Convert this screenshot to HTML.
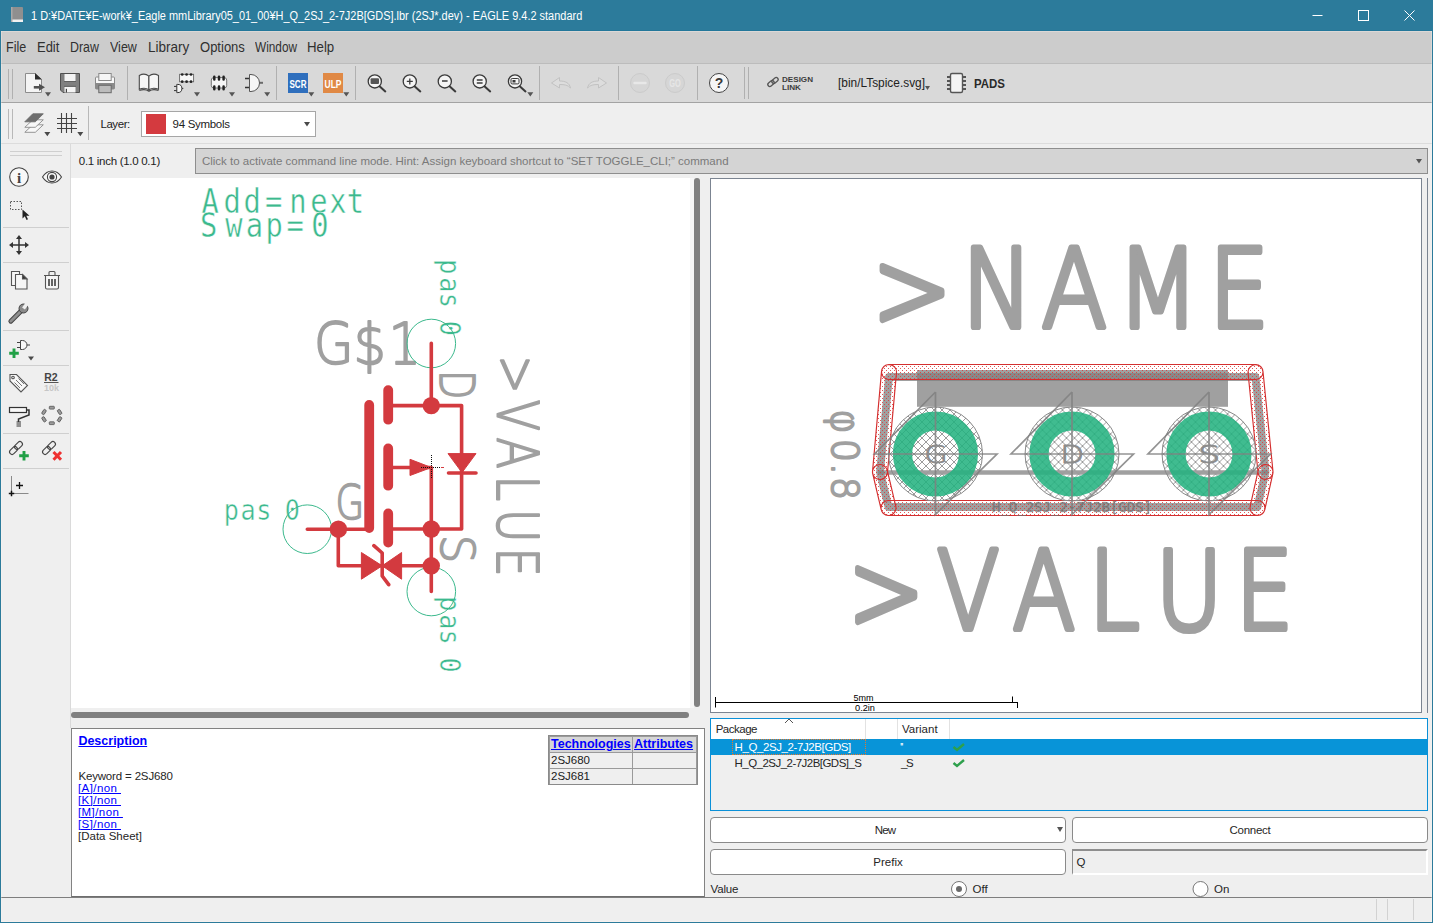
<!DOCTYPE html>
<html lang="en">
<head>
<meta charset="utf-8">
<title>EAGLE 9.4.2 standard</title>
<style>
*{box-sizing:border-box;margin:0;padding:0}
html,body{width:1433px;height:923px;overflow:hidden;background:#efefef}
body{font-family:"Liberation Sans","Noto Sans CJK JP",sans-serif;font-size:12px;color:#1a1a1a;position:relative}
.abs{position:absolute}
#win{position:absolute;left:0;top:0;width:1433px;height:923px;background:#efefef;overflow:hidden}
#title{left:0;top:0;width:1433px;height:31px;background:#2c7b9b;color:#fff}
#title .t{position:absolute;left:31.400px;top:9px;font-size:12px;line-height:14px;transform:scaleX(.9125);transform-origin:0 0;white-space:nowrap}
#menu{left:1px;top:31px;width:1431px;height:32px;background:#cccccc}
#menu span{position:absolute;top:8px;transform-origin:0 0;font-size:14px;line-height:16px;color:#303030;white-space:nowrap}
#tb1{left:1px;top:63px;width:1431px;height:40px;background:#d9d9d9;border-top:1px solid #bcbcbc;border-bottom:1px solid #a3a3a3}
#tb2{left:1px;top:103px;width:1431px;height:41px;background:#efefef;border-bottom:1px solid #dcdcdc}
.vsep{position:absolute;width:1px;background:#b4b4b4}
#bl,#br,#bb{background:#2c7b9b}
#bl{left:0;top:31px;width:1px;height:892px}
#br{left:1432px;top:31px;width:1px;height:892px}
#bb{left:0;top:922px;width:1433px;height:1px}
svg{position:absolute;overflow:visible}
.dsc{font-size:11.500px;color:#262626;white-space:nowrap;line-height:13px}
.lk{color:#0000ff;text-decoration:underline}
.tc{background:#efefef;font-size:11.500px;line-height:15px;white-space:nowrap;overflow:hidden}
.tc span{position:absolute;left:1px;top:0}
.th{background:#d6d6d6;font-weight:bold;color:#0000ff;font-size:12.500px}
.th span{text-decoration:underline}
.pk{font-size:11.500px;color:#262626;white-space:nowrap;line-height:13px}
.btn{background:#fff;border:1px solid #8a8a8a;border-radius:4px;text-align:center;font-size:11.500px;line-height:24px;color:#262626}

</style>
</head>
<body>
<div id="win">
<!--TITLE-->
<div id="title" class="abs">
  <svg style="left:10px;top:6px" width="14" height="18" viewBox="0 0 14 18"><rect x="1" y="1" width="12" height="15" rx="1" fill="#8f8f8f"/><rect x="2" y="13.5" width="11" height="2.5" fill="#f2f2f2"/><rect x="1" y="1" width="1.5" height="15" fill="#a9a9a9"/></svg>
  <div class="t">1 D:¥DATE¥E-work¥_Eagle mmLibrary05_01_00¥H_Q_2SJ_2-7J2B[GDS].lbr (2SJ*.dev) - EAGLE 9.4.2 standard</div>
  <svg style="left:1312px;top:10px" width="110" height="12" viewBox="0 0 110 12" fill="none" stroke="#fff" stroke-width="1"><path d="M0.5 5.5H10.5"/><rect x="46.500" y="0.5" width="10" height="10"/><path d="M92.500 0.500l10 10M102.500 0.500l-10 10"/></svg>
</div>
<!--MENU-->
<div id="menu" class="abs">
  <span style="left:4.8px;transform:scaleX(0.894)">File</span><span style="left:35.8px;transform:scaleX(0.927)">Edit</span><span style="left:68.6px;transform:scaleX(0.887)">Draw</span><span style="left:108.6px;transform:scaleX(0.894)">View</span><span style="left:147.0px;transform:scaleX(0.967)">Library</span><span style="left:199px;transform:scaleX(0.93)">Options</span><span style="left:254px;transform:scaleX(0.845)">Window</span><span style="left:306px;transform:scaleX(0.946)">Help</span>
</div>
<div id="tb1" class="abs">
<svg style="left:0;top:0" width="1431" height="38" viewBox="1 64 1431 38">
  <g stroke="#b0b0b0" stroke-width="1"><path d="M8.500 69V99M12.500 69V99"/><path d="M127.500 66V100M276.500 66V100M355.500 66V100M539.500 66V100M618.500 66V100M697.500 66V100M744.500 67V99M748.500 67V99"/></g>
  <g fill="#555"><path d="M45 92.300h6l-3 4.200zM194 92.300h6l-3 4.200zM229 92.300h6l-3 4.200zM264.200 92.300h6l-3 4.200zM308.300 92.300h6l-3 4.200zM343.300 92.300h6l-3 4.200zM527.300 92.300h6l-3 4.200zM925 86h5l-2.500 4z"/></g>
  <!-- new/open -->
  <g><path d="M25.500 73.500h9.500l6.500 6v13h-16z" fill="#f4f4f4" stroke="#8c8c8c"/><path d="M35 73l7 6.500h-7z" fill="#2e2e2e"/><path d="M33.800 87.300h6" stroke="#505050" stroke-width="2.600"/><path d="M39 83.800l6 3.500-6 3.500z" fill="#505050"/></g>
  <!-- save -->
  <g><path d="M60.500 73.500h19v19h-16.500l-2.500-2.500z" fill="#808080" stroke="#505050"/><rect x="64.500" y="74" width="11" height="7" fill="#f4f4f4"/><rect x="64.500" y="86.800" width="11" height="5.700" fill="#f4f4f4"/><rect x="65.800" y="88.800" width="1.200" height="3.700" fill="#444"/><path d="M64 81.500h12M64 86.300h12" stroke="#606060" stroke-width="1"/></g>
  <!-- print -->
  <g><rect x="95.500" y="77" width="19" height="12" rx="1" fill="#f8f8f8" stroke="#8a8a8a"/><rect x="95.500" y="83" width="19" height="6" fill="#8a8a8a"/><rect x="98.800" y="73.500" width="12.400" height="7" fill="#f6f6f6" stroke="#8a8a8a"/><rect x="98.800" y="85.300" width="12.400" height="7.400" fill="#bcbcbc" stroke="#6a6a6a"/></g>
  <!-- book -->
  <g fill="#f6f6f6" stroke="#4a4a4a" stroke-width="1.100"><path d="M139.300 75.500c3.200-1.800 6.800-1.700 9.600 0.600v13.600c-2.800-1.800-6.400-1.800-9.600-0.400z"/><path d="M158.500 75.500c-3.200-1.800-6.800-1.700-9.600 0.600v13.600c2.800-1.800 6.400-1.800 9.600-0.400z"/><path d="M139.300 90.500c3.200-1.200 6.800-1.200 9.600 0.600c2.800-1.800 6.400-1.800 9.600-0.600" fill="none" stroke-width="1.300"/></g>
  <!-- device edit -->
  <rect x="179.600" y="74.300" width="14" height="7.500" fill="#f6f6f6" stroke="#666" stroke-width="0.900"/>
  <g fill="#222"><circle cx="182.200" cy="74.500" r="1.350"/><circle cx="186.600" cy="74.500" r="1.350"/><circle cx="191" cy="74.500" r="1.350"/><circle cx="182.200" cy="81.700" r="1.350"/><circle cx="186.600" cy="81.700" r="1.350"/><circle cx="191" cy="81.700" r="1.350"/></g>
  <g stroke="#333" fill="none" stroke-width="1"><path d="M174 86.400h2.800M174 90.600h2.800M181 88.400h2.300"/><path d="M176.800 84.400h1a4.100 4.100 0 0 1 0 8.200h-1z" fill="#f6f6f6"/></g>
  <!-- package edit -->
  <rect x="211.300" y="77.600" width="15.400" height="10.400" rx="2.500" fill="#f6f6f6" stroke="#666" stroke-width="0.900"/>
  <g stroke="#222" stroke-width="2.500" stroke-linecap="round"><path d="M214.300 76.800v2.700M219 76.800v2.700M223.600 76.800v2.700M214.300 86.500v2.700M219 86.500v2.700M223.600 86.500v2.700"/></g>
  <!-- gate -->
  <g stroke="#333" fill="none" stroke-width="1.300"><path d="M245 78.500h4.500M245 87.500h4.500"/><path d="M258 82.800h5" stroke="#6a6a6a" stroke-width="2"/><path d="M249.500 74.500h1.500a8.500 8.500 0 0 1 0 17h-1.500z" fill="#f6f6f6" stroke="#555" stroke-width="1"/></g>
  <!-- SCR / ULP -->
  <rect x="288" y="73" width="20" height="20" fill="#2f6fbd"/><text x="298" y="87.500" font-size="10.500" font-weight="bold" fill="#fff" text-anchor="middle" textLength="17" lengthAdjust="spacingAndGlyphs" font-family="Liberation Sans, sans-serif">SCR</text>
  <rect x="323" y="73" width="20" height="20" fill="#e08945"/><text x="333" y="87.500" font-size="10.500" font-weight="bold" fill="#fff" text-anchor="middle" textLength="17" lengthAdjust="spacingAndGlyphs" font-family="Liberation Sans, sans-serif">ULP</text>
  <!-- zoom icons -->
  <g stroke="#3a3a3a" fill="#f4f4f4" stroke-width="1.300">
    <circle cx="374.800" cy="81.400" r="6.600"/><path d="M379.800 86.400l5.500 5" stroke-width="2" stroke-linecap="round"/>
    <circle cx="409.800" cy="81.400" r="6.600"/><path d="M414.800 86.400l5.500 5" stroke-width="2" stroke-linecap="round"/>
    <circle cx="444.800" cy="81.400" r="6.600"/><path d="M449.800 86.400l5.500 5" stroke-width="2" stroke-linecap="round"/>
    <circle cx="479.700" cy="81.400" r="6.600"/><path d="M484.700 86.400l5.500 5" stroke-width="2" stroke-linecap="round"/>
    <circle cx="515" cy="81.400" r="6.600"/><path d="M520 86.400l5.500 5" stroke-width="2" stroke-linecap="round"/>
  </g>
  <rect x="370.600" y="78.300" width="8.400" height="5.600" rx="1" fill="#555"/>
  <g stroke="#3a3a3a" stroke-width="1.300"><path d="M406.800 81.400h6M409.800 78.400v6M442 81h5.600M476.800 80h5.800M476.800 83h5.800"/></g>
  <rect x="511" y="78.500" width="8" height="5.400" rx="1.200" fill="none" stroke="#3a3a3a"/><rect x="512.500" y="80" width="3" height="2.500" fill="#3a3a3a"/>
  <!-- undo/redo -->
  <g fill="#dddddd" stroke="#c2c2c2" stroke-width="1"><path d="M551.500 83l8-5.500v3.500c6 0 10 2 11 7c-2.500-3-6-3.500-11-3.500v3.500z"/><path d="M606.500 83l-8-5.500v3.500c-6 0-10 2-11 7c2.500-3 6-3.500 11-3.500v3.500z"/></g>
  <!-- stop/go -->
  <circle cx="640" cy="83" r="9.500" fill="#d6d6d6" stroke="#cbcbcb"/><path d="M634.500 83h11" stroke="#e8e8e8" stroke-width="2.500" stroke-linecap="round"/>
  <circle cx="675" cy="83" r="9.500" fill="#d6d6d6" stroke="#cbcbcb"/><text x="675" y="86.800" font-size="10" font-weight="bold" fill="#e6e6e6" text-anchor="middle" textLength="11.500" lengthAdjust="spacingAndGlyphs" font-family="Liberation Sans, sans-serif">GO</text>
  <!-- help -->
  <circle cx="719" cy="83" r="9.500" fill="#f6f6f6" stroke="#444" stroke-width="1"/><text x="719" y="88" font-size="14" font-weight="bold" fill="#3a3a3a" text-anchor="middle" font-family="Liberation Sans, sans-serif">?</text>
  <!-- design link -->
  <g fill="none" stroke="#555" stroke-width="1.300"><rect x="767.500" y="81.500" width="7" height="4" rx="2" transform="rotate(-40 771 83.500)"/><rect x="771.500" y="78.500" width="7" height="4" rx="2" transform="rotate(-40 775 80.500)"/></g>
  <text x="782" y="82" font-size="8" font-weight="bold" fill="#3c3c3c" font-family="Liberation Sans, sans-serif" textLength="31" lengthAdjust="spacingAndGlyphs">DESIGN</text>
  <text x="782" y="89.500" font-size="8" font-weight="bold" fill="#3c3c3c" font-family="Liberation Sans, sans-serif" textLength="19" lengthAdjust="spacingAndGlyphs">LINK</text>
  <text x="838" y="87" font-size="12" fill="#222" font-family="Liberation Sans, sans-serif" textLength="87" lengthAdjust="spacingAndGlyphs">[bin/LTspice.svg]</text>
  <!-- PADS -->
  <g><rect x="950.500" y="73.500" width="12" height="19" rx="1.500" fill="#f4f4f4" stroke="#555" stroke-width="1.400"/><g stroke="#555" stroke-width="1.800"><path d="M947 77h4M947 81h4M947 85h4M947 89h4M962 77h4M962 81h4M962 85h4M962 89h4"/></g></g>
  <text x="974" y="88" font-size="12" font-weight="bold" fill="#2a2a2a" font-family="Liberation Sans, sans-serif" textLength="31" lengthAdjust="spacingAndGlyphs">PADS</text>
</svg>
</div>


<div id="tb2" class="abs">
<svg style="left:0;top:0" width="1431" height="40" viewBox="1 103 1431 40">
  <g stroke="#b8b8b8" stroke-width="1"><path d="M8.500 109V139M12.500 109V139M88.500 106V140"/></g>
  <g fill="#4a4a4a"><path d="M44.300 132h6l-3 4.200zM77.300 132h6l-3 4.200z"/></g>
  <!-- layers -->
  <g stroke="#8a8a8a" stroke-width="0.900"><path d="M24.800 132.300l8-7.500h10.500l-8 7.500z" fill="#f8f8f8"/><path d="M24.800 127.300l8-7.500h10.500l-8 7.500z" fill="#f8f8f8"/><path d="M24.800 121.800l8-8h10.500l-8 8z" fill="#6e6e6e" stroke="#6e6e6e"/></g>
  <!-- grid -->
  <g stroke="#444" stroke-width="1.100"><path d="M57 118.500h20M57 123.500h20M57 128.500h20M61.500 113v20M66.500 113v20M71.500 113v20"/></g>
  <rect x="141.500" y="111.500" width="174" height="25" fill="#fff" stroke="#a6a6a6"/>
  <rect x="146" y="114" width="20" height="20" fill="#d43a3f"/>
  <path d="M304 122h6l-3 4.500z" fill="#4a4a4a"/>
</svg>
<div class="abs" style="left:99.400px;top:15px;font-size:11.500px;line-height:13px;letter-spacing:-0.41px;color:#222">Layer:</div>
<div class="abs" style="left:171.600px;top:15px;font-size:11.500px;line-height:13px;letter-spacing:-0.31px;color:#222">94 Symbols</div>
</div>


<div class="abs" style="left:70px;top:144px;width:1px;height:584px;background:#dadada"></div>
<svg style="left:0;top:144px" width="71" height="360" viewBox="0 144 71 360">
    <g stroke="#cfcfcf" stroke-width="1"><path d="M10 151.500H62M10 155.500H62"/><path d="M3 227.500H69M3 262.500H69M3 330.500H69M3 365.500H69M3 433.500H69M3 468.500H69"/></g>
  <!-- info -->
  <circle cx="19" cy="177" r="9.300" fill="#f8f8f8" stroke="#444" stroke-width="1.100"/><text x="19" y="182.500" font-size="15" font-weight="bold" fill="#444" text-anchor="middle" font-family="Liberation Serif, serif">i</text>
  <!-- eye -->
  <g fill="none" stroke="#444" stroke-width="1.100"><path d="M42.500 177c5-8 14-8 19 0c-5 8-14 8-19 0z" fill="#f8f8f8"/><circle cx="52" cy="177" r="4.600"/></g><circle cx="52" cy="177" r="2.600" fill="#444"/>
  <!-- select -->
  <rect x="10.500" y="201.500" width="11" height="8" fill="none" stroke="#555" stroke-dasharray="1.500 1.500"/><path d="M22.500 209.500v9l2.300-2.200 1.700 3.700 1.500-0.700-1.700-3.600h3.200z" fill="#222"/>
  <!-- move -->
  <g stroke="#333" stroke-width="1.500" fill="#333"><path d="M19 237v16M11 245h16"/><path d="M19 235l3 4h-6zM19 255l3-4h-6zM9 245l4-3v6zM29 245l-4-3v6z" stroke="none"/></g>
  <!-- copy -->
  <g fill="#f6f6f6" stroke="#555" stroke-width="1.100"><path d="M11.500 271.500h8l0 14h-8z"/><path d="M15.500 274.500h7l4.500 4.500v10h-11.500z"/><path d="M22.500 274.500v4.500h4.500z" fill="#333"/></g>
  <!-- trash -->
  <g fill="#f6f6f6" stroke="#555" stroke-width="1.100"><path d="M45.500 275.500h13v12a1.500 1.500 0 0 1-1.500 1.500h-10a1.500 1.500 0 0 1-1.500-1.500z"/><path d="M44 275.500h16M49 275v-2.500a1 1 0 0 1 1-1h4a1 1 0 0 1 1 1v2.500" fill="none"/><path d="M49 279v7M52 279v7M55 279v7" stroke="#333" stroke-width="1.500"/></g>
  <!-- wrench -->
  <g><path d="M10.800 321.200l11-11" stroke="#444" stroke-width="4.800" stroke-linecap="round"/><path d="M10.800 321.200l11-11" stroke="#8e8e8e" stroke-width="2.800" stroke-linecap="round"/><circle cx="23.500" cy="308.500" r="4.500" fill="#8a8a8a" stroke="#444"/><path d="M23.500 308.500l4-5.500" stroke="#efefef" stroke-width="3.500"/></g>
  <!-- add gate -->
  <g stroke="#444" fill="none" stroke-width="1"><path d="M17 342.500h3M17 347.500h3M27 345h3"/><path d="M20.500 340.500h2a4.500 4.500 0 0 1 0 9h-2z" fill="#f8f8f8"/></g>
  <path d="M9.200 353.200h9.600M14 348.400v9.600" stroke="#21a046" stroke-width="2.900"/><path d="M28 356.500h6l-3 4z" fill="#4a4a4a"/>
  <!-- tag -->
  <g fill="#f8f8f8" stroke="#555" stroke-width="1.100"><path d="M10 374.500h6.500l11 11-6.500 6.500-11-11z"/><circle cx="13" cy="377.500" r="1.300"/><path d="M16 380l6 6M14.500 382.500l5.500 5.500M18.500 378.500l5.500 5.500" stroke-width="0.800"/></g>
  <text x="51" y="381.300" font-size="10.500" font-weight="bold" fill="#444" text-anchor="middle" font-family="Liberation Sans, sans-serif">R2</text><path d="M44 382.500h14.500" stroke="#555" stroke-width="1"/><text x="51.500" y="391" font-size="9" font-weight="bold" fill="#c6c6c6" text-anchor="middle" font-family="Liberation Sans, sans-serif">10k</text>
  <!-- roller -->
  <g><rect x="9.500" y="407.500" width="17" height="5" fill="#f8f8f8" stroke="#333" stroke-width="1.200"/><path d="M26.500 410h2.500v5l-10.500 4v3" fill="none" stroke="#333" stroke-width="1.500"/><path d="M16.500 422h4.500M16.500 424h4.500M16.500 426h4.500" stroke="#333" stroke-width="1.200"/></g>
  <!-- dashed circle -->
  <g fill="#9c9c9c" stroke="#555" stroke-width="0.800"><rect x="49.300" y="406.300" width="5" height="2.800" rx="0.600"/><rect x="49.300" y="421.800" width="5" height="2.800" rx="0.600"/><rect x="42.600" y="409.500" width="2.800" height="5" rx="0.600" transform="rotate(32 44 412)"/><rect x="58.200" y="409.500" width="2.800" height="5" rx="0.600" transform="rotate(-32 59.600 412)"/><rect x="42.600" y="416.800" width="2.800" height="5" rx="0.600" transform="rotate(-32 44 419.300)"/><rect x="58.200" y="416.800" width="2.800" height="5" rx="0.600" transform="rotate(32 59.600 419.300)"/></g>
  <!-- links -->
  <g fill="none" stroke="#444" stroke-width="1.100"><rect x="9" y="448" width="9" height="5" rx="2.500" transform="rotate(-45 13.500 450.500)"/><rect x="14" y="443" width="9" height="5" rx="2.500" transform="rotate(-45 18.500 445.500)"/><rect x="42" y="448" width="9" height="5" rx="2.500" transform="rotate(-45 46.500 450.500)"/><rect x="47" y="443" width="9" height="5" rx="2.500" transform="rotate(-45 51.500 445.500)"/></g>
  <path d="M19.200 455.700h9.600M24 450.900v9.600" stroke="#21a046" stroke-width="2.900"/><path d="M53.500 452l7.500 7.800M61 452l-7.500 7.800" stroke="#ee3030" stroke-width="3"/>
  <!-- origin -->
  <g stroke="#8a8a8a" stroke-width="1"><path d="M11.500 476v17M11 493.500h17.500"/></g>
  <g stroke="#111" stroke-width="1.300"><path d="M16 485.500h7M19.500 482v7"/><path d="M8.800 493.500h5.400M11.500 490.800v5.400" stroke-width="1.500"/></g>
</svg>


<div class="abs" style="left:78.800px;top:155px;font-size:11.500px;line-height:13px;letter-spacing:-0.287px;color:#222;white-space:nowrap">0.1 inch (1.0 0.1)</div>
<div class="abs" style="left:195px;top:148px;width:1233px;height:26px;background:#d4d4d4;border:1px solid #8e8e8e"><span style="position:absolute;left:5.900px;top:6px;font-size:11.500px;line-height:13px;color:#7a7a7a;white-space:nowrap">Click to activate command line mode. Hint: Assign keyboard shortcut to “SET TOGGLE_CLI;” command</span>
<svg style="left:1220px;top:10px" width="6" height="5" viewBox="0 0 6 5"><path d="M0 0h6l-3 4.500z" fill="#555"/></svg></div>


<div class="abs" style="left:71px;top:178px;width:619px;height:530px;background:#fff"></div>
<div class="abs" style="left:690px;top:178px;width:4px;height:530px;background:#f6f6f6"></div>
<div class="abs" style="left:694px;top:178px;width:6px;height:529px;background:#808080;border-radius:3px"></div>
<div class="abs" style="left:71px;top:712px;width:618px;height:6px;background:#808080;border-radius:3px"></div>
<svg style="left:71px;top:178px" width="619" height="530" viewBox="71 178 619 530">
  <g font-family="DejaVu Sans Mono, Liberation Mono, monospace" fill="#3cb98d" stroke="#fff" stroke-width="0.45">
    <text transform="scale(0.86,1)" y="213.10" font-size="33.5" x="234.4 259.8 283.2 308.1 336.3 360.9 382.8 403.3">Add=next</text>
    <text transform="scale(0.86,1)" y="237.30" font-size="33.5" x="232.7 261.9 285.7 308.8 333.1 361.9">Swap=0</text>
    <text transform="scale(0.9,1)" y="519.60" font-size="28" x="248.5 267.1 284.6 298.1 316.3">pas 0</text>
    <text transform="translate(440.30,0) rotate(90) scale(0.9,1)" font-size="28" x="288.2 308.2 325.2 338.7 356.3">pas 0</text>
    <text transform="translate(440.30,0) rotate(90) scale(0.9,1)" font-size="28" x="662.5 682.5 699.5 713.0 730.6">pas 0</text>
  </g>
  <g font-family="DejaVu Sans Light, DejaVu Sans, Liberation Sans, sans-serif" font-weight="200" font-size="100" fill="#a0a0a0" stroke="#a0a0a0" stroke-linejoin="round">
    <text transform="matrix(0.5111 0 0 0.5615 0 364.35)" x="614.5 691.6 760.3" stroke-width="3.4">G$1</text>
    <text transform="matrix(0.3704 0 0 0.4796 0 519.46)" x="905.7" stroke-width="3.6">G</text>
    <text transform="matrix(0 0.3794 -0.4863 0 440.38 0)" x="975.4" stroke-width="3.6">D</text>
    <text transform="matrix(0 0.4477 -0.4695 0 441.01 0)" x="1194.4" stroke-width="3.6">S</text>
    <text transform="matrix(0 0.4618 -0.5772 0 496.64 0)" x="769.5 865.3 947.0 1029.7 1101.6 1185.4" stroke-width="3.4">&gt;VALUE</text>
  </g>
  <g fill="none" stroke="#3cb98d" stroke-width="1"><circle cx="431.300" cy="343.500" r="24.300"/><circle cx="431.300" cy="591.500" r="24.300"/><circle cx="307.300" cy="529.200" r="24.300"/></g>
  <g stroke="#d33a3f" fill="none" stroke-linecap="round" stroke-linejoin="round">
    <g stroke-width="3.600"><path d="M431.300 343.300V405.600M389 405.600H461.600V529H389M389 467.500H431.300V591.500M307.300 529.200H369M338.300 529.200V565.800H431.300M448.500 473H476M373.900 545.700l8.300 7.300v23l6.500 8.700"/></g>
    <g stroke-width="9.800"><path d="M388.200 390.100V419.700M388.200 448.400V485.700M388.200 513.400V542.600M369.200 405V528"/></g>
  </g>
  <g fill="#d33a3f"><circle cx="431.300" cy="405.600" r="8.700"/><circle cx="431.300" cy="529" r="8.700"/><circle cx="431.300" cy="565.800" r="8.700"/><circle cx="338.400" cy="529.200" r="8.700"/>
    <path d="M448 453.600h28l-14 19zM410 459.300l21.300 8.200l-21.300 8zM361.400 552.500l20.800 13.300l-20.800 13.400zM401.600 552.500l-19.400 13.300l19.400 13.400z" stroke="#d33a3f" stroke-width="1" stroke-linejoin="round"/></g>
  <g stroke="#111" stroke-width="1" stroke-dasharray="1 1" shape-rendering="crispEdges"><path d="M421 467.500h20M431.500 455v23"/></g><path d="M441 467.500h3" stroke="#d33a3f" stroke-width="1" shape-rendering="crispEdges"/>
</svg>

<div class="abs" style="left:710px;top:178px;width:712px;height:535px;background:#fff;border:1px solid #7b8491"></div>
<div class="abs" style="left:1427px;top:178px;width:1px;height:535px;background:#7b8491"></div>
<svg style="left:711px;top:179px" width="711" height="534" viewBox="711 179 711 534">
  <defs>
    <pattern id="xh" width="8" height="8" patternUnits="userSpaceOnUse" x="6" y="2"><path d="M0 0L8 8M0 8L8 0" stroke="#9c9c9c" stroke-width="1" fill="none" shape-rendering="crispEdges"/></pattern>
    <pattern id="rd" width="4" height="4" patternUnits="userSpaceOnUse"><rect x="0" y="0" width="1" height="1" fill="#dc3a3a"/><rect x="2" y="2" width="1" height="1" fill="#dc3a3a"/></pattern>
    <path id="ol" d="M889 377H1255.500L1265.500 472L1257.500 507H888.500L880 472Z"/>
    <path id="rp" d="M889 372L1255.5 372L1265.5 472L1257.5 508L888.5 508L880 472Z"/>
  </defs>
  <g font-family="DejaVu Sans Light, DejaVu Sans, Liberation Sans, sans-serif" font-weight="200" font-size="100" fill="#a0a0a0" stroke="#a0a0a0" stroke-linejoin="round" stroke-linecap="round">
    <text transform="matrix(0.9498 0 0 1.0954 0 327.38)" x="918.4 1012.8 1096.8 1176.1 1272.9" stroke-width="5.7">&gt;NAME</text>
    <text transform="matrix(0.9123 0 0 1.0903 0 629.28)" x="929.5 1027.0 1110.1 1193.5 1266.8 1354.2" stroke-width="5.7">&gt;VALUE</text>
    <text transform="matrix(0 0.3599 -0.3813 0 831.60 0)" x="1138.0 1220.0 1287.2 1325.7" stroke-width="5.5">φ0.8</text>
  </g>
  <g fill="none" stroke="rgba(128,128,128,.75)" stroke-linejoin="round" stroke-linecap="round"><use href="#ol" stroke-width="7.800"/><path d="M880 472.500H1266" stroke-width="4.300"/></g>
  <rect x="917" y="370" width="311" height="36.800" fill="rgba(128,128,128,.75)"/>
  <use href="#rp" fill="none" stroke="url(#rd)" stroke-width="15" stroke-linejoin="round" opacity="0.85"/>
  <path d="M889.00 379.50L1255.50 379.50A7.5 7.5 0 0 0 1255.50 364.50L889.00 364.50A7.5 7.5 0 0 0 889.00 379.50ZM1248.04 372.75L1258.04 472.75A7.5 7.5 0 0 0 1272.96 471.25L1262.96 371.25A7.5 7.5 0 0 0 1248.04 372.75ZM1258.18 470.37L1250.18 506.37A7.5 7.5 0 0 0 1264.82 509.63L1272.82 473.63A7.5 7.5 0 0 0 1258.18 470.37ZM1257.50 500.50L888.50 500.50A7.5 7.5 0 0 0 888.50 515.50L1257.50 515.50A7.5 7.5 0 0 0 1257.50 500.50ZM895.80 506.28L887.30 470.28A7.5 7.5 0 0 0 872.70 473.72L881.20 509.72A7.5 7.5 0 0 0 895.80 506.28ZM887.47 472.67L896.47 372.67A7.5 7.5 0 0 0 881.53 371.33L872.53 471.33A7.5 7.5 0 0 0 887.47 472.67Z" fill="none" stroke="#d42f2f" stroke-width="1.150"/>
  <g id="pad">
    <circle cx="935.500" cy="454" r="47" fill="url(#xh)" stroke="#8a8a8a" stroke-width="1"/>
    <circle cx="935.500" cy="454" r="33" fill="none" stroke="rgba(36,178,128,.87)" stroke-width="19.200"/>
    <path d="M935.500 392V514.500L997 454H874.500L935.500 392" fill="none" stroke="rgba(128,128,128,.85)" stroke-width="1.700"/>
  </g>
  <use href="#pad" x="136.500"/><use href="#pad" x="273.500"/>
  <g font-family="DejaVu Sans Light, DejaVu Sans, Liberation Sans, sans-serif" font-weight="200" font-size="100" fill="#8c8c8c" stroke="#8c8c8c" stroke-linejoin="round"><text transform="matrix(0.3026 0 0 0.2420 0 462.76)" x="3054.4" stroke-width="3.3">G</text><text transform="matrix(0.3111 0 0 0.2507 0 463.09)" x="3408.0" stroke-width="3.3">D</text><text transform="matrix(0.3519 0 0 0.2420 0 462.76)" x="3404.6" stroke-width="3.3">S</text></g>
  <text x="992" y="512.300" font-family="DejaVu Sans Mono, Liberation Mono, monospace" font-size="14" fill="rgba(112,112,112,.72)" stroke="rgba(112,112,112,.5)" stroke-width="0.500" textLength="160" lengthAdjust="spacingAndGlyphs">H_Q_2SJ_2-7J2B[GDS]</text>
  <g stroke="#000" stroke-width="1" fill="none"><path d="M715.500 697V707.500M715 702.500H1018M1012.500 696.500V702.500M1017.500 702.500V708"/></g>
  <g font-family="Liberation Sans, sans-serif" font-size="9" fill="#000" text-anchor="middle"><text x="863.500" y="700.700" textLength="20" lengthAdjust="spacingAndGlyphs">5mm</text><text x="865" y="710.500" textLength="20" lengthAdjust="spacingAndGlyphs">0.2in</text></g>
</svg>

<div class="abs" style="left:71px;top:728px;width:634px;height:169px;background:#fff;border:1px solid #828282;border-bottom-color:#6e6e6e"></div>
<div class="abs dsc" style="left:78.400px;top:735px;font-weight:bold;color:#0000ff;text-decoration:underline;font-size:12.500px">Description</div>
<div class="abs dsc" style="left:78.400px;top:770px;letter-spacing:-0.16px">Keyword = 2SJ680</div>
<div class="abs dsc lk" style="left:78px;top:782px;letter-spacing:0.42px">[A]/non&nbsp;</div>
<div class="abs dsc lk" style="left:78px;top:794px;letter-spacing:0.42px">[K]/non&nbsp;</div>
<div class="abs dsc lk" style="left:78px;top:806px;letter-spacing:0.42px">[M]/non&nbsp;</div>
<div class="abs dsc lk" style="left:78px;top:818px;letter-spacing:0.42px">[S]/non&nbsp;</div>
<div class="abs dsc" style="left:78px;top:830px">[Data Sheet]</div>
<div class="abs" style="left:548px;top:735px;width:150px;height:50px;background:#9a9a9a;border:1px solid #8a8a8a"></div>
<div class="abs tc th" style="left:550px;top:737px;width:82px;height:15px"><span>Technologies</span></div>
<div class="abs tc th" style="left:633px;top:737px;width:63px;height:15px"><span>Attributes</span></div>
<div class="abs tc" style="left:550px;top:753px;width:82px;height:15px"><span>2SJ680</span></div>
<div class="abs tc" style="left:633px;top:753px;width:63px;height:15px"></div>
<div class="abs tc" style="left:550px;top:769px;width:82px;height:15px"><span>2SJ681</span></div>
<div class="abs tc" style="left:633px;top:769px;width:63px;height:15px"></div>

<div class="abs" style="left:710px;top:718px;width:718px;height:93px;background:#efefef;border:1px solid #0a90d8"></div>
<div class="abs" style="left:711px;top:719px;width:716px;height:20px;background:#fff"></div>
<div class="abs" style="left:865px;top:719px;width:1px;height:20px;background:#e2e2e2"></div>
<div class="abs" style="left:897px;top:719px;width:1px;height:20px;background:#e2e2e2"></div>
<div class="abs" style="left:949px;top:719px;width:1px;height:20px;background:#e2e2e2"></div>
<div class="abs pk" style="left:715.700px;top:723px;letter-spacing:-0.5px">Package</div>
<div class="abs pk" style="left:902px;top:723px">Variant</div>
<svg style="left:784px;top:718px" width="10" height="6" viewBox="0 0 10 6"><path d="M1 5L5 1L9 5" fill="none" stroke="#555" stroke-width="1"/></svg>
<div class="abs" style="left:711px;top:739px;width:716px;height:16px;background:#0894d8"></div>
<div class="abs" style="left:732px;top:739px;width:134px;height:16px;border:1px dotted #e8792b"></div>
<div class="abs pk" style="left:734.500px;top:741px;color:#fff;letter-spacing:-0.4px">H_Q_2SJ_2-7J2B[GDS]</div>
<div class="abs pk" style="left:900px;top:741px;color:#fff;letter-spacing:-1px">''</div>
<div class="abs pk" style="left:734.500px;top:757px;letter-spacing:-0.53px">H_Q_2SJ_2-7J2B[GDS]_S</div>
<div class="abs pk" style="left:901px;top:757px;letter-spacing:-1.500px">_S</div>
<svg style="left:952px;top:742px" width="14" height="26" viewBox="0 0 14 26"><path d="M1.500 5l3.500 3l7-6" fill="none" stroke="#2ea04c" stroke-width="2.400"/><path d="M1.500 21l3.500 3l7-6" fill="none" stroke="#2ea04c" stroke-width="2.400"/></svg>
<div class="abs btn" style="left:710px;top:817px;width:356px;height:26px"><span style="letter-spacing:-0.8px;position:relative;left:-3px">New</span></div>
<svg style="left:1057px;top:827px" width="6" height="5" viewBox="0 0 6 5"><path d="M0 0h6l-3 5z" fill="#555"/></svg>
<div class="abs btn" style="left:1072px;top:817px;width:356px;height:26px"><span style="letter-spacing:-0.27px">Connect</span></div>
<div class="abs btn" style="left:710px;top:849px;width:356px;height:26px"><span>Prefix</span></div>
<div class="abs" style="left:1072px;top:849px;width:356px;height:26px;background:#efefef;border-top:2px solid #8e8e8e;border-left:1px solid #8e8e8e;border-right:2px solid #fff;border-bottom:2px solid #fff"><span class="pk" style="position:absolute;left:3.500px;top:5px">Q</span></div>
<div class="abs pk" style="left:710.500px;top:883px;letter-spacing:-0.16px">Value</div>
<svg style="left:950px;top:880px" width="270" height="18" viewBox="950 880 270 18"><circle cx="959" cy="889" r="7.500" fill="#fff" stroke="#777" stroke-width="1"/><circle cx="959" cy="889" r="3" fill="#6a6a6a"/><circle cx="1200.500" cy="889" r="7.500" fill="#fff" stroke="#777" stroke-width="1"/></svg>
<div class="abs pk" style="left:972.500px;top:883px">Off</div>
<div class="abs pk" style="left:1214px;top:883px">On</div>

<div class="abs" style="left:1px;top:897px;width:1431px;height:1px;background:#7e7e7e"></div>
<div class="abs" style="left:1376px;top:899px;width:1px;height:21px;background:#d2d2d2"></div>
<div class="abs" style="left:1387px;top:899px;width:1px;height:21px;background:#d2d2d2"></div>
<div class="abs" style="left:1413px;top:899px;width:1px;height:21px;background:#d2d2d2"></div>

<div class="abs" style="left:0;top:30px;width:1433px;height:1px;background:#23779a"></div><div class="abs" style="left:1px;top:31px;width:1431px;height:1px;background:rgba(255,245,240,.3)"></div><div class="abs" style="left:1px;top:31px;width:1px;height:891px;background:rgba(255,245,240,.3)"></div><div class="abs" style="left:1431px;top:31px;width:1px;height:891px;background:rgba(255,245,240,.3)"></div><div class="abs" style="left:1px;top:921px;width:1431px;height:1px;background:rgba(255,245,240,.45)"></div>
<div id="bl" class="abs"></div><div id="br" class="abs"></div><div id="bb" class="abs"></div>
</div>
</body>
</html>
